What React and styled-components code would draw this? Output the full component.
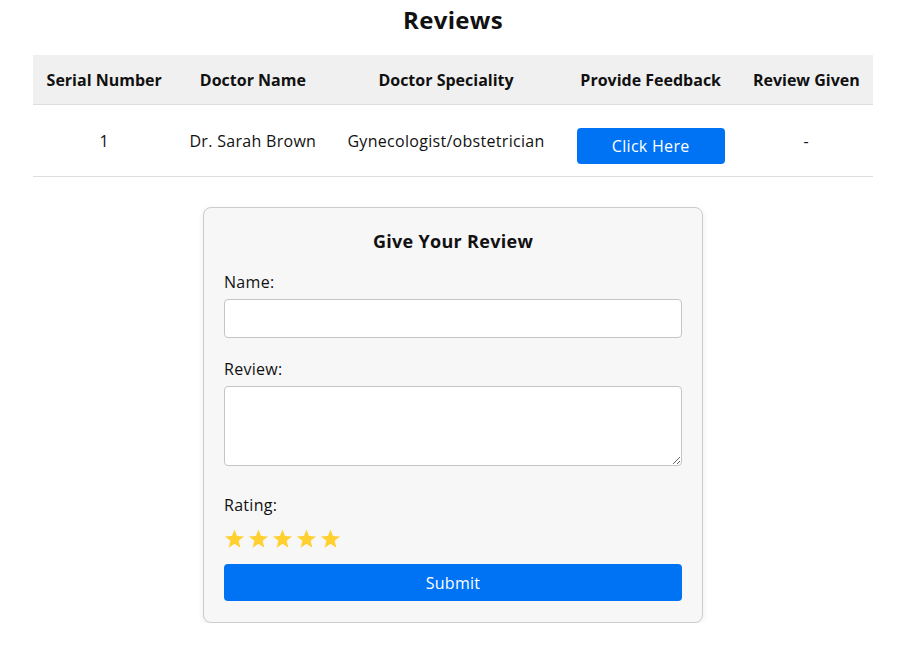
import React from 'react';
import styled, { createGlobalStyle } from 'styled-components';

const GlobalStyle = createGlobalStyle`
  body {
    margin: 0;
    background: #ffffff;
    font-family: "Open Sans", "Liberation Sans", Arial, sans-serif;
    color: #111;
  }
`;

const Page = styled.div`
  width: 906px;
  padding-top: 4px;
`;

const Title = styled.h1`
  margin: 0 0 19px;
  text-align: center;
  font-size: 24px;
  font-weight: 700;
  letter-spacing: 0.3px;
  line-height: 32px;
`;

const Table = styled.table`
  width: 840px;
  margin: 0 auto;
  border-collapse: collapse;
`;

const HeadCell = styled.th`
  background: #f0f0f0;
  height: 49px;
  padding: 0 8px;
  font-size: 16px;
  font-weight: 700;
  text-align: center;
  border-bottom: 1px solid #dddddd;
`;

const Cell = styled.td`
  height: 71px;
  padding: 0 8px;
  font-size: 16px;
  letter-spacing: 0.3px;
  text-align: center;
  border-bottom: 1px solid #dddddd;
`;

const BlueButton = styled.button`
  border: none;
  border-radius: 4px;
  background: #0073f5;
  color: #ffffff;
  font-family: inherit;
  font-size: 16px;
  letter-spacing: 0.3px;
  cursor: pointer;
  width: ${p => (p.$full ? '100%' : '148px')};
  height: ${p => (p.$full ? '37px' : '36px')};
  margin-top: ${p => (p.$full ? '0' : '10px')};
`;

const Card = styled.form`
  width: 500px;
  box-sizing: border-box;
  margin: 30px auto 0;
  padding: 20px 20px 21px;
  background: #f7f7f7;
  border: 1px solid #cccccc;
  border-radius: 8px;
  box-shadow: 0 2px 6px rgba(0, 0, 0, 0.08);
`;

const CardTitle = styled.h2`
  margin: 0 0 17px;
  text-align: center;
  font-size: 18px;
  font-weight: 700;
  letter-spacing: 0.3px;
  line-height: 26px;
`;

const Field = styled.div`
  display: flex;
  flex-direction: column;
  margin-bottom: ${p => p.$gap || '20px'};
`;

const Label = styled.label`
  font-size: 16px;
  letter-spacing: 0.3px;
  line-height: 22px;
  margin-bottom: 6px;
`;

const TextInput = styled.input`
  height: 39px;
  box-sizing: border-box;
  border: 1px solid #c4c4c4;
  border-radius: 4px;
  background: #fff;
  padding: 0 10px;
`;

const TextArea = styled.textarea`
  height: 80px;
  box-sizing: border-box;
  border: 1px solid #c4c4c4;
  border-radius: 4px;
  background: #fff;
  padding: 8px 10px;
`;

const Stars = styled.div`
  display: flex;
  gap: 3px;
  margin-top: 7px;
  margin-bottom: 15px;
`;

const Star = () => (
  <svg width="21" height="20" viewBox="0 0 24 23">
    <path d="M12 0.5l2.9 7.6 8.1 0.4-6.3 5.1 2.1 7.9L12 17l-6.8 4.5 2.1-7.9L1 8.5l8.1-0.4z" fill="#ffd030" />
  </svg>
);

export default function App() {
  return (
    <Page>
      <GlobalStyle />
      <Title>Reviews</Title>
      <Table>
        <thead>
          <tr>
            <HeadCell>Serial Number</HeadCell>
            <HeadCell>Doctor Name</HeadCell>
            <HeadCell>Doctor Speciality</HeadCell>
            <HeadCell>Provide Feedback</HeadCell>
            <HeadCell>Review Given</HeadCell>
          </tr>
        </thead>
        <tbody>
          <tr>
            <Cell>1</Cell>
            <Cell>Dr. Sarah Brown</Cell>
            <Cell>Gynecologist/obstetrician</Cell>
            <Cell>
              <BlueButton type="button">Click Here</BlueButton>
            </Cell>
            <Cell>-</Cell>
          </tr>
        </tbody>
      </Table>

      <Card onSubmit={e => e.preventDefault()}>
        <CardTitle>Give Your Review</CardTitle>
        <Field>
          <Label htmlFor="name">Name:</Label>
          <TextInput id="name" type="text" />
        </Field>
        <Field $gap="28px">
          <Label htmlFor="review">Review:</Label>
          <TextArea id="review" />
        </Field>
        <Field $gap="0">
          <Label>Rating:</Label>
          <Stars>
            <Star />
            <Star />
            <Star />
            <Star />
            <Star />
          </Stars>
        </Field>
        <BlueButton type="submit" $full>Submit</BlueButton>
      </Card>
    </Page>
  );
}
